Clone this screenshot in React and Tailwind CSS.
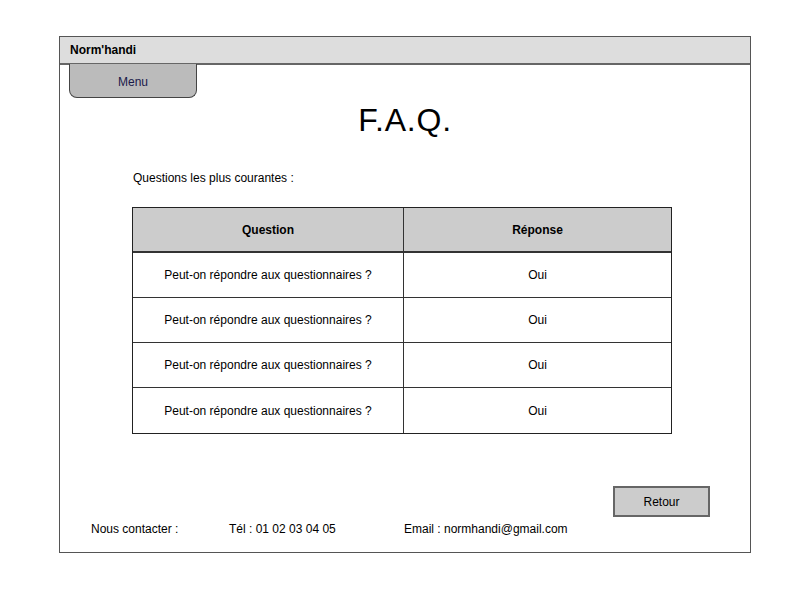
import React from "react";

const rows = [
  { q: "Peut-on répondre aux questionnaires ?", a: "Oui" },
  { q: "Peut-on répondre aux questionnaires ?", a: "Oui" },
  { q: "Peut-on répondre aux questionnaires ?", a: "Oui" },
  { q: "Peut-on répondre aux questionnaires ?", a: "Oui" },
];

export default function App() {
  return (
    <div className="w-[800px] h-[600px] bg-white pt-[36px] pl-[59px] font-['Liberation_Sans',sans-serif] text-black">
      <div className="w-[692px] h-[517px] border border-[#555] flex flex-col">
        {/* title bar */}
        <div className="h-[28px] bg-[#dddddd] border-b-2 border-[#666] flex items-center px-[10px] text-[12px] font-bold shrink-0">
          Norm'handi
        </div>

        {/* menu tab */}
        <div className="pl-[9px]">
          <div className="w-[128px] h-[34px] -mt-px pt-[3px] bg-[#bbbbbb] border border-[#444] border-t-0 rounded-b-[8px] flex items-center justify-center text-[12px] text-[#1a1a4a]">
            Menu
          </div>
        </div>

        <h1 className="text-center text-[32px] leading-none mt-[6px] tracking-wide">F.A.Q.</h1>

        <p className="ml-[73px] mt-[33px] text-[12px]">Questions les plus courantes :</p>

        {/* table */}
        <div className="ml-[72px] mt-[20px] w-[540px] border border-[#222]">
          <div className="grid grid-cols-[271px_1fr] h-[45px] bg-[#cccccc] border-b-2 border-[#333] text-[12px] font-bold">
            <div className="flex items-center justify-center border-r border-[#333]">Question</div>
            <div className="flex items-center justify-center">Réponse</div>
          </div>
          {rows.map((r, i) => (
            <div
              key={i}
              className={`grid grid-cols-[271px_1fr] h-[45px] text-[12px] ${i < rows.length - 1 ? "border-b border-[#333]" : ""}`}
            >
              <div className="flex items-center justify-center border-r border-[#333]">{r.q}</div>
              <div className="flex items-center justify-center">{r.a}</div>
            </div>
          ))}
        </div>

        {/* retour button */}
        <div className="flex justify-end pr-[40px] mt-[52px]">
          <button className="w-[97px] h-[31px] bg-[#cccccc] border-2 border-[#666] text-[12px]">Retour</button>
        </div>

        {/* footer */}
        <div className="flex items-center text-[12px] mt-[3px] ml-[31px]">
          <span className="w-[138px]">Nous contacter :</span>
          <span className="w-[175px]">Tél : 01 02 03 04 05</span>
          <span>Email : normhandi@gmail.com</span>
        </div>
      </div>
    </div>
  );
}
